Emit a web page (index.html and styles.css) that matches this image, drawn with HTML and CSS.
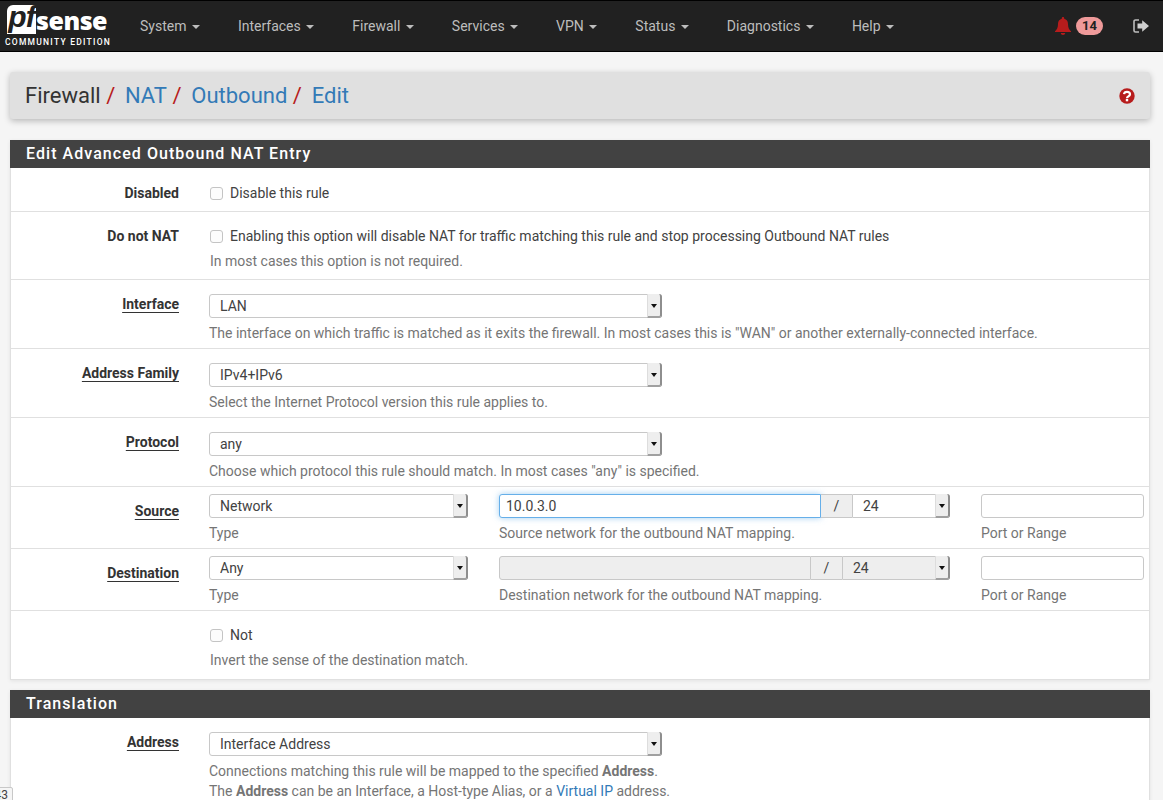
FILE: index.html
```html
<!DOCTYPE html>
<html lang="en">
<head>
    <meta charset="UTF-8">
    <title>Firewall / NAT / Outbound / Edit</title>
    <link rel="stylesheet" href="styles.css">
</head>
<body>
    <!-- top menu -->
    <nav class="navbar">
        <div class="logo">
            <div class="logo-top"><span class="logo-pf">pf</span><span class="logo-sense">sense</span></div>
            <div class="logo-edition">COMMUNITY EDITION</div>
        </div>
        <ul class="menu">
            <li>System <i class="caret"></i></li>
            <li>Interfaces <i class="caret"></i></li>
            <li>Firewall <i class="caret"></i></li>
            <li>Services <i class="caret"></i></li>
            <li>VPN <i class="caret"></i></li>
            <li>Status <i class="caret"></i></li>
            <li>Diagnostics <i class="caret"></i></li>
            <li>Help <i class="caret"></i></li>
        </ul>
        <div class="nav-right">
            <svg class="bell" viewBox="0 0 16 18" width="16" height="18"><path fill="#b71c1c" d="M8 0c.7 0 1.2.5 1.2 1.2v.5C11.600 2.200 13 4.200 13 7c0 4 1.200 5.500 3 7.200v.8H0v-.8C1.800 12.500 3 11 3 7c0-2.800 1.400-4.800 3.800-5.300v-.5C6.800.5 7.300 0 8 0zM5.800 16h4.400c0 1.200-1 2-2.200 2s-2.200-.8-2.200-2z"/></svg>
            <span class="badge">14</span>
            <svg class="logout" viewBox="0 0 16 14" width="16" height="14"><path fill="none" stroke="#bdbdbd" stroke-width="1.600" d="M6 1H2.500C1.600 1 1 1.600 1 2.500v9c0 .9.600 1.500 1.500 1.500H6"/><path fill="#d0d0d0" d="M4.500 4.600h4.700V1.200L16 7l-6.800 5.800V9.400H4.500z"/></svg>
        </div>
    </nav>

    <div class="content">
        <!-- breadcrumb -->
        <div class="crumbs">
            <h1>
                <span>Firewall</span><span class="sep">/</span>
                <a>NAT</a><span class="sep">/</span>
                <a>Outbound</a><span class="sep">/</span>
                <a>Edit</a>
            </h1>
            <svg class="help" viewBox="0 0 16 16" width="16" height="16"><circle cx="8" cy="8" r="7.700" fill="#b71c1c"/><path fill="none" stroke="#fff" stroke-width="2.200" d="M5 6.200C5.200 4.600 6.400 3.800 8 3.800c1.800 0 3 1 3 2.400 0 2.200-3 2.100-3 4"/><rect x="6.800" y="11" width="2.400" height="2.300" fill="#fff"/></svg>
        </div>

        <!-- main form panel -->
        <section class="panel">
            <h2 class="panel-title">Edit Advanced Outbound NAT Entry</h2>

            <div class="row row-check row-short">
                <div class="label">Disabled</div>
                <div class="field">
                    <label class="check"><input type="checkbox"> Disable this rule</label>
                </div>
            </div>

            <div class="row row-check">
                <div class="label">Do not NAT</div>
                <div class="field">
                    <label class="check"><input type="checkbox"> Enabling this option will disable NAT for traffic matching this rule and stop processing Outbound NAT rules</label>
                    <p class="hint">In most cases this option is not required.</p>
                </div>
            </div>

            <div class="row">
                <div class="label"><u>Interface</u></div>
                <div class="field">
                    <div class="select select-wide"><select><option>LAN</option></select></div>
                    <p class="hint">The interface on which traffic is matched as it exits the firewall. In most cases this is "WAN" or another externally-connected interface.</p>
                </div>
            </div>

            <div class="row">
                <div class="label"><u>Address Family</u></div>
                <div class="field">
                    <div class="select select-wide"><select><option>IPv4+IPv6</option></select></div>
                    <p class="hint">Select the Internet Protocol version this rule applies to.</p>
                </div>
            </div>

            <div class="row">
                <div class="label"><u>Protocol</u></div>
                <div class="field">
                    <div class="select select-wide"><select><option>any</option></select></div>
                    <p class="hint">Choose which protocol this rule should match. In most cases "any" is specified.</p>
                </div>
            </div>

            <div class="row row-triple">
                <div class="label"><u>Source</u></div>
                <div class="triple">
                    <div>
                        <div class="select"><select><option>Network</option></select></div>
                        <p class="hint">Type</p>
                    </div>
                    <div>
                        <div class="addr">
                            <input class="addr-input focused" type="text" value="10.0.3.0">
                            <span class="slash">/</span>
                            <div class="select select-mask"><select><option>24</option></select></div>
                        </div>
                        <p class="hint">Source network for the outbound NAT mapping.</p>
                    </div>
                    <div>
                        <input class="text-input" type="text">
                        <p class="hint">Port or Range</p>
                    </div>
                </div>
            </div>

            <div class="row row-triple">
                <div class="label"><u>Destination</u></div>
                <div class="triple">
                    <div>
                        <div class="select"><select><option>Any</option></select></div>
                        <p class="hint">Type</p>
                    </div>
                    <div>
                        <div class="addr addr-off">
                            <input class="addr-input" type="text" disabled>
                            <span class="slash">/</span>
                            <div class="select select-mask"><select disabled><option>24</option></select></div>
                        </div>
                        <p class="hint">Destination network for the outbound NAT mapping.</p>
                    </div>
                    <div>
                        <input class="text-input" type="text">
                        <p class="hint">Port or Range</p>
                    </div>
                </div>
            </div>

            <div class="row row-check row-last">
                <div class="label"></div>
                <div class="field">
                    <label class="check"><input type="checkbox"> Not</label>
                    <p class="hint">Invert the sense of the destination match.</p>
                </div>
            </div>
        </section>

        <section class="panel">
            <h2 class="panel-title">Translation</h2>
            <div class="row">
                <div class="label"><u>Address</u></div>
                <div class="field">
                    <div class="select select-wide"><select><option>Interface Address</option></select></div>
                    <p class="hint">Connections matching this rule will be mapped to the specified <b>Address</b>.<br>The <b>Address</b> can be an Interface, a Host-type Alias, or a <a>Virtual IP</a> address.</p>
                </div>
            </div>
        </section>
    </div>

    <!-- status tip in the corner -->
    <div class="corner-tip">43</div>
</body>
</html>
```

FILE: styles.css
```css
html, body {
    height: 800px;
    overflow: hidden;
}
body {
    margin: 0;
    background-color: #f5f5f5;
    font-family: Roboto, "Liberation Sans", sans-serif;
    font-size: 14px;
    line-height: 20px;
    color: #424242;
}
a {
    color: #337ab7;
}

/* navbar */
.navbar {
    display: flex;
    align-items: center;
    height: 52px;
    box-sizing: border-box;
    border-top: 1px solid #000;
    border-bottom: 1px solid #000;
    background-color: #212121;
}
.logo {
    width: 140px;
    flex: none;
    padding-left: 5px;
    box-sizing: border-box;
    color: #fff;
}
.logo-top {
    display: flex;
    align-items: center;
    height: 30px;
    padding-left: 2px;
}
.logo-pf {
    width: 29px;
    height: 29px;
    background-color: #fff;
    border-radius: 6px 0 0 0;
    color: #212121;
    font-family: "Liberation Sans", sans-serif;
    font-size: 30px;
    font-style: italic;
    font-weight: 700;
    line-height: 24px;
    letter-spacing: -1px;
    text-align: center;
}
.logo-sense {
    font-family: "Open Sans", sans-serif;
    font-size: 25px;
    font-weight: 800;
    line-height: 30px;
    letter-spacing: -0.5px;
}
.logo-edition {
    margin-top: 1px;
    font-size: 8.500px;
    font-weight: 500;
    line-height: 12px;
    letter-spacing: 1.250px;
    white-space: nowrap;
}
.menu {
    display: flex;
    flex: 1;
    margin: 0;
    padding: 0;
    list-style: none;
    color: #bdbdbd;
}
.menu li {
    padding-right: 38px;
    white-space: nowrap;
}
.caret {
    display: inline-block;
    margin-left: 2px;
    vertical-align: middle;
    border-top: 4px solid #bdbdbd;
    border-left: 4px solid transparent;
    border-right: 4px solid transparent;
}
.nav-right {
    display: flex;
    align-items: center;
    padding-right: 14px;
}
.badge {
    margin-left: 5px;
    padding: 0 6px;
    height: 18px;
    border-radius: 9px;
    background-color: #ef9a9a;
    color: #212121;
    font-size: 13px;
    font-weight: 700;
    line-height: 18px;
}
.logout {
    margin-left: 30px;
}

/* page */
.content {
    padding: 20px 13px 0 10px;
}
.crumbs {
    display: flex;
    align-items: center;
    justify-content: space-between;
    height: 47px;
    padding: 0 15px;
    background-color: #e0e0e0;
    border-radius: 3px;
    box-shadow: 0 2px 6px rgba(0, 0, 0, 0.25);
}
.crumbs h1 {
    margin: 0;
    font-size: 22px;
    font-weight: 400;
    line-height: 24px;
    color: #333;
}
.sep {
    margin: 0 4.300px 0 5.500px;
    color: #b71c1c;
}
.panel {
    margin-top: 21px;
    background-color: #fff;
    border: 1px solid #e0e0e0;
    border-top: 0;
    box-shadow: 0 1px 4px rgba(0, 0, 0, 0.08);
}
.panel + .panel {
    margin-top: 10px;
}
.panel-title {
    margin: 0 -1px;
    height: 28px;
    padding-left: 16px;
    background-color: #424242;
    color: #fff;
    font-size: 16px;
    font-weight: 500;
    line-height: 28px;
    letter-spacing: 1.050px;
}

/* form rows */
.row {
    display: flex;
    min-height: 69px;
    box-sizing: border-box;
    padding-top: 14px;
    border-bottom: 1px solid #e0e0e0;
}
.row-check {
    min-height: 68px;
}
.row-short {
    min-height: 44px;
    padding-top: 15px;
}
.row-last {
    border-bottom: 0;
}
.row-triple {
    min-height: 62px;
    padding-top: 7px;
}
.row-triple .label {
    padding-top: 7px;
}
.label {
    flex: none;
    width: 168px;
    font-weight: 700;
    text-align: right;
    color: #333;
}
.label u {
    text-underline-offset: 3px;
}
.field {
    margin-left: 30px;
    flex: 1;
}
.row-check .field {
    margin-left: 31px;
}
.check {
    display: flex;
    align-items: center;
    height: 20px;
}
.check input {
    width: 13px;
    height: 13px;
    margin: 0 7px 0 0;
    appearance: none;
    background-color: #fcfcfc;
    border: 1px solid #c4c4c4;
    border-radius: 3px;
}
.hint {
    margin: 5px 0 0;
    color: #757575;
}
.hint a {
    color: #337ab7;
}

/* selects with the old style arrow button */
.select {
    position: relative;
    height: 24px;
    box-sizing: border-box;
    background-color: #fff;
    border: 1px solid #c8c8c8;
    border-radius: 3px;
}
.select select {
    width: 100%;
    height: 22px;
    padding: 0 0 0 10px;
    appearance: none;
    background: transparent;
    border: 0;
    font: inherit;
    color: #424242;
    opacity: 1;
}
.select::after {
    content: "";
    position: absolute;
    top: -1px;
    right: -1px;
    width: 15px;
    height: 24px;
    box-sizing: border-box;
    background-color: #eee;
    border-left: 1px solid #ddd;
    border-right: 2px solid #8e8e8e;
    border-bottom: 2px solid #a0a0a0;
    border-radius: 0 3px 3px 0;
}
.select::before {
    content: "";
    position: absolute;
    z-index: 1;
    top: 9px;
    right: 4px;
    border-top: 4px solid #111;
    border-left: 3px solid transparent;
    border-right: 3px solid transparent;
}
.select-wide {
    width: 453px;
}
.triple {
    display: grid;
    grid-template-columns: 259px 451px 163px;
    column-gap: 31px;
    margin-left: 30px;
}
.addr {
    display: flex;
    height: 24px;
}
.addr-input {
    flex: 1;
    min-width: 0;
    height: 24px;
    box-sizing: border-box;
    padding: 0 6px;
    background-color: #fff;
    border: 1px solid #c8c8c8;
    border-radius: 3px 0 0 3px;
    font: inherit;
    color: #424242;
}
.addr-input.focused {
    border-color: #66afe9;
    box-shadow: 0 0 6px rgba(102, 175, 233, 0.6);
}
.slash {
    width: 31px;
    box-sizing: border-box;
    background-color: #eee;
    border: 1px solid #c8c8c8;
    border-width: 1px 0;
    line-height: 22px;
    text-align: center;
}
.select-mask {
    width: 98px;
    flex: none;
    border-radius: 0 3px 3px 0;
}
.addr-off .addr-input,
.addr-off .slash,
.addr-off .select {
    background-color: #eee;
}
.addr-off .select-mask {
    width: 108px;
}
.text-input {
    display: block;
    width: 100%;
    height: 24px;
    box-sizing: border-box;
    background-color: #fff;
    border: 1px solid #c8c8c8;
    border-radius: 3px;
}
.corner-tip {
    position: absolute;
    left: -8px;
    top: 787px;
    width: 21px;
    height: 16px;
    box-sizing: border-box;
    padding-right: 4px;
    background-color: #f5f5f5;
    border: 1px solid #c8c8c8;
    border-radius: 2px;
    font-size: 12px;
    line-height: 14px;
    text-align: right;
}
```
